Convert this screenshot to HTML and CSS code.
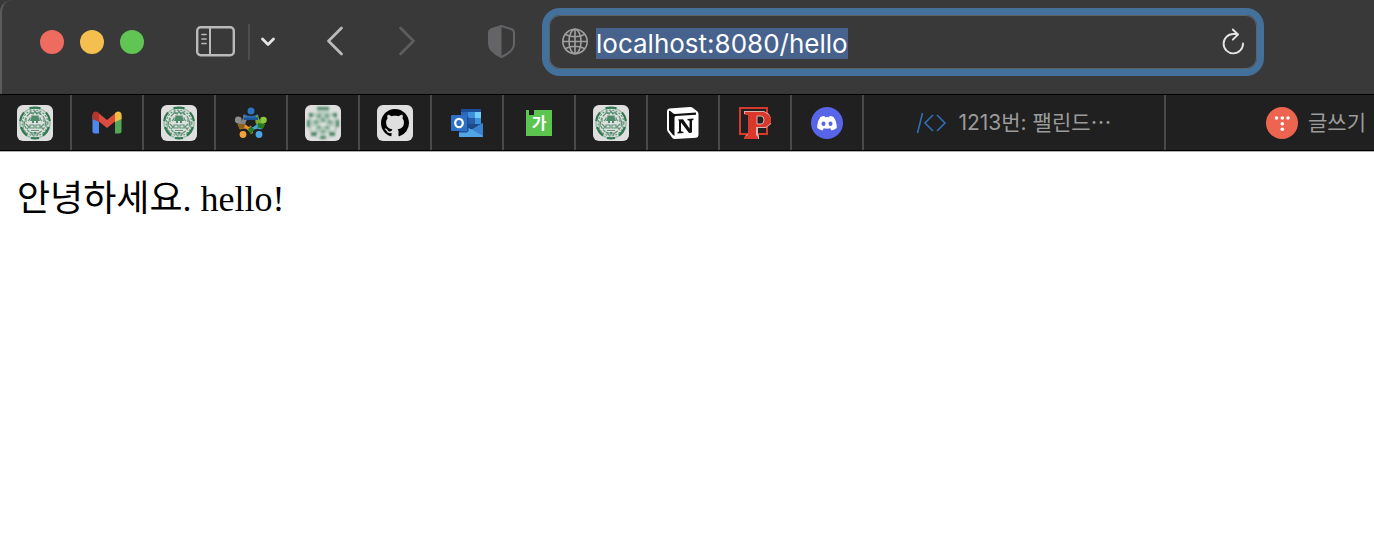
FILE: index.html
```html
<!DOCTYPE html>
<html lang="ko">
<head>
    <meta charset="UTF-8">
    <meta name="viewport" content="width=device-width, initial-scale=1.0">
    <title>hello</title>
    <link rel="stylesheet" href="styles.css">
</head>
<body>
    <svg class="symbols" aria-hidden="true">
        <symbol id="emblem" viewBox="0 0 36 36">
            <rect width="36" height="36" rx="6" fill="#dedfde"/>
            <circle cx="18" cy="18" r="15" fill="none" stroke="#8db39d" stroke-width="1.2"/>
            <g fill="none" stroke="#2f7850" stroke-width="2.2">
                <path d="M12.5 3.4Q18 1.8 23.5 3.4M3.2 16Q3.8 11 7 7.6M32.8 16Q32.2 11 29 7.6M4 22Q6 27.5 10 30.5M32 22Q30 27.5 26 30.5M14 33Q18 33.8 22 33"/>
            </g>
            <g fill="none" stroke="#5f9577" stroke-width="1.2">
                <circle cx="18" cy="18" r="12.8" stroke-dasharray="2 1.4"/>
                <circle cx="18" cy="18" r="10.4" stroke-dasharray="3 1.4"/>
                <path d="M12 9L14 7L16 9L18 6L20 9L22 7L24 9M14 11H22M12 13H24M11 16L13 14M25 16L23 14M9 19L12 22L10 24M27 19L24 22L26 24M13 20H17V23H13ZM19 20H23V23H19ZM14 25.5H22M13 27L16 30M23 27L20 30M9 13V17M27 13V17M7 16V22M29 16V22"/>
            </g>
            <path d="M15 11H21L23 16H21V18H19V16H17V18H15V16H13ZM16.5 27H19.5L18 31Z" fill="#4f8b69"/>
        </symbol>
    </svg>

    <header class="browser">
        <div class="toolbar">
            <div class="lights">
                <button class="light red" aria-label="Close"></button>
                <button class="light yellow" aria-label="Minimize"></button>
                <button class="light green" aria-label="Zoom"></button>
            </div>

            <div class="sidebar-tools">
                <button class="tool" aria-label="Sidebar">
                    <svg width="40" height="32" viewBox="0 0 40 32" fill="none" stroke="#bababb" stroke-linecap="round">
                        <rect x="1.2" y="1.2" width="36.6" height="28" rx="3.5" stroke-width="2.4"/>
                        <path d="M14 1.5V29" stroke-width="2" stroke-linecap="butt"/>
                        <path d="M6 8.5H10M6 13H10M6 17.5H10" stroke-width="1.7"/>
                    </svg>
                </button>
                <span class="divider"></span>
                <button class="tool" aria-label="Tab groups">
                    <svg width="16" height="12" viewBox="0 0 16 12" fill="none" stroke="#e4e4e4" stroke-width="2.8" stroke-linecap="round" stroke-linejoin="round">
                        <path d="M2.5 3L8 8.5L13.5 3"/>
                    </svg>
                </button>
            </div>

            <div class="history">
                <button class="tool" aria-label="Back">
                    <svg width="20" height="32" viewBox="0 0 20 32" fill="none" stroke="#bababb" stroke-width="2.8" stroke-linecap="round" stroke-linejoin="round">
                        <path d="M15.5 2L2.5 15L15.5 28"/>
                    </svg>
                </button>
                <button class="tool" aria-label="Forward">
                    <svg width="20" height="32" viewBox="0 0 20 32" fill="none" stroke="#5d5d5e" stroke-width="2.8" stroke-linecap="round" stroke-linejoin="round">
                        <path d="M2.5 2L15.5 15L2.5 28"/>
                    </svg>
                </button>
            </div>

            <button class="tool" aria-label="Privacy report">
                <svg width="28" height="34" viewBox="0 0 28 34">
                    <path d="M13.5 1L23 4Q26 5 26 7.5V18.5Q26 26.5 13.5 32Q1 26.5 1 18.5V7.5Q1 5 4 4Z" fill="none" stroke="#646466" stroke-width="2" stroke-linejoin="round"/>
                    <path d="M13.5 1L4 4Q1 5 1 7.5V18.5Q1 26.5 13.5 32Z" fill="#646466"/>
                </svg>
            </button>

            <form class="address">
                <svg width="28" height="28" viewBox="0 0 28 28" fill="none" stroke="#a0a0a1" stroke-width="1.6" aria-hidden="true">
                    <circle cx="14" cy="13.5" r="12.2"/>
                    <ellipse cx="14" cy="13.5" rx="6" ry="12.2"/>
                    <path d="M14 1.5V25.5M2 13.5H26M4.5 6.5Q14 11 23.5 6.5M4.5 20.5Q14 16 23.5 20.5"/>
                </svg>
                <input class="url" type="text" id="url" aria-label="Address" value="localhost:8080/hello" spellcheck="false">
                <button class="tool" type="button" aria-label="Reload">
                    <svg width="24" height="28" viewBox="0 0 24 28" fill="none" stroke="#e4e4e4" stroke-width="1.9" stroke-linecap="round" stroke-linejoin="round">
                        <path d="M22 15.5A9.7 9.7 0 1 1 12.3 6H16.5"/>
                        <path d="M11.8 1.5L17 6.5L11.8 11.7"/>
                    </svg>
                </button>
            </form>
        </div>

        <nav class="tabs" aria-label="Tabs">
            <button class="tab" aria-label="Emblem 1"><svg width="36" height="36"><use href="#emblem"/></svg></button>
            <button class="tab" aria-label="Gmail">
                <svg width="30" height="23" viewBox="0 0 30 23">
                    <path d="M.5 4L7 8V22.5H3Q.5 22.5 .5 20.5Z" fill="#4f87ed"/>
                    <path d="M29.5 4L23 8V22.5H27Q29.5 22.5 29.5 20.5Z" fill="#56a755"/>
                    <path d="M7 2.5L15 9L23 2.5V10.5L15 17L7 10.5Z" fill="#db4c3e"/>
                    <path d="M.5 8V4Q.5 .5 4 .5Q5.5 .5 7 2V11Z" fill="#b5352b"/>
                    <path d="M29.5 8V4Q29.5 .5 26 .5Q24.5 .5 23 2V11Z" fill="#f3bd42"/>
                </svg>
            </button>
            <button class="tab" aria-label="Emblem 2"><svg width="36" height="36"><use href="#emblem"/></svg></button>
            <button class="tab" aria-label="Community">
                <svg width="34" height="32" viewBox="0 0 34 32">
                    <path d="M9.5 7Q17 11 24 7V14H9.5Z" fill="#2c6cb4"/>
                    <path d="M22 9L24 8Q25 15 31 17L29 21L21 16Z" fill="#78ad32"/>
                    <path d="M29 21L27 22.5Q20 20 17 27L14.5 23L23 17Z" fill="#4aa5dc"/>
                    <path d="M19 26L17 27Q13 19 6 22.5L3.5 17L17 18Z" fill="#e7962f"/>
                    <path d="M3.5 17Q9 15 9.5 8L13 11L11 18Z" fill="#858585"/>
                    <path d="M9.5 10Q17 12 24 10V13H9.5Z" fill="#1d5590"/>
                    <path d="M14 22L17 19.5L20 22L17 27.5ZM24 16L31 17L28.5 22L23.5 20.5Z" fill="#237b20"/>
                    <path d="M3.5 17H11L10 21.5L5.5 22Z" fill="#87601d"/>
                    <path d="M13 13H21L22 18L19 20L17 18.5L15 20L12 18Z" fill="#202020"/>
                    <circle cx="17" cy="4" r="3.5" fill="#2f74c0"/>
                    <circle cx="29.5" cy="13" r="3.3" fill="#8dc63f"/>
                    <circle cx="25" cy="27.5" r="3.4" fill="#4aa5e5"/>
                    <circle cx="9" cy="27.5" r="3.4" fill="#f4a13b"/>
                    <circle cx="4.3" cy="13" r="3.4" fill="#8d8d8d"/>
                </svg>
            </button>
            <button class="tab" aria-label="Emblem 3">
                <svg width="36" height="36" viewBox="0 0 36 36">
                    <defs>
                        <filter id="soft"><feGaussianBlur stdDeviation=".8"/></filter>
                    </defs>
                    <rect width="36" height="36" rx="6" fill="#dedfde"/>
                    <g filter="url(#soft)">
                        <circle cx="18" cy="18" r="15.5" fill="#b7cbbf"/>
                        <path d="M12 2H24V5H12ZM4 8H8V12H4ZM28 8H32V12H28ZM2 15H5V22H2ZM31 15H34V22H31ZM6 27H12V31H6ZM24 27H30V31H24ZM15 31H21V34H15Z" fill="#4c8a69"/>
                        <path d="M12 9H16V13H12ZM20 9H24V13H20ZM9 15H13V19H9ZM23 15H27V19H23ZM16 13H20V17H16ZM12 21H16V24H12ZM20 21H24V24H20ZM16 25H20V28H16Z" fill="#7ba78d"/>
                        <path d="M8 5H12V8H8ZM24 5H28V8H24ZM7 12H11V15H7ZM25 12H29V15H25ZM15 18H21V21H15ZM7 21H10V26H7ZM26 21H29V26H26ZM12 28H15V32H12ZM21 28H24V32H21Z" fill="#dbe3de"/>
                    </g>
                </svg>
            </button>
            <button class="tab" aria-label="GitHub">
                <svg width="36" height="36" viewBox="0 0 36 36">
                    <rect width="36" height="36" rx="6" fill="#dedfde"/>
                    <path transform="translate(4 4) scale(1.75)" d="M8 0C3.58 0 0 3.58 0 8c0 3.54 2.29 6.53 5.47 7.59.4.07.55-.17.55-.38 0-.19-.01-.82-.01-1.49-2.01.37-2.53-.49-2.69-.94-.09-.23-.48-.94-.82-1.13-.28-.15-.68-.52-.01-.53.63-.01 1.08.58 1.23.82.72 1.21 1.87.87 2.33.66.07-.52.28-.87.51-1.07-1.78-.2-3.64-.89-3.64-3.95 0-.87.31-1.59.82-2.15-.08-.2-.36-1.02.08-2.12 0 0 .67-.21 2.2.82.64-.18 1.32-.27 2-.27s1.36.09 2 .27c1.53-1.04 2.2-.82 2.2-.82.44 1.1.16 1.92.08 2.12.51.56.82 1.27.82 2.15 0 3.07-1.87 3.75-3.65 3.95.29.25.54.73.54 1.48 0 1.07-.01 1.93-.01 2.2 0 .21.15.46.55.38A8.01 8.01 0 0 0 16 8c0-4.42-3.58-8-8-8Z" fill="#000"/>
                </svg>
            </button>
            <button class="tab" aria-label="Outlook">
                <svg width="32" height="28" viewBox="0 0 32 28">
                    <path d="M10 1Q10 0 11 0H29Q30 0 30 1V17H10Z" fill="#2c69bd"/>
                    <path d="M10 1Q10 0 11 0H29Q30 0 30 1V3H10Z" fill="#1c4d99"/>
                    <path d="M17 3H24V9H17Z" fill="#3c91dd"/>
                    <path d="M24 3H30V9H24Z" fill="#70cef8"/>
                    <path d="M24 9H30V15H24Z" fill="#3d92dc"/>
                    <path d="M17 9H24V15H17Z" fill="#265da9"/>
                    <path d="M17 15H30L21 20L16 18Z" fill="#1c4a8b"/>
                    <path d="M32 14V28H8V20H21Z" fill="#3c83cf"/>
                    <path d="M8 20L18 19L32 27Q31.5 28 31 28H9Q8 28 8 27Z" fill="#52a6e6"/>
                    <path d="M16 7L17.5 8V22L16 23.5H8V22H16Z" fill="#1d4f94"/>
                    <rect y="6" width="16" height="16" rx="1" fill="#2d71c7"/>
                    <ellipse cx="8" cy="14" rx="3.8" ry="4.2" fill="none" stroke="#fff" stroke-width="2.2"/>
                </svg>
            </button>
            <button class="tab" aria-label="Dictionary"><span class="book">가</span></button>
            <button class="tab" aria-label="Emblem 4"><svg width="36" height="36"><use href="#emblem"/></svg></button>
            <button class="tab" aria-label="Notion">
                <svg width="32" height="32" viewBox="0 0 32 32">
                    <path d="M2 1.5L23 0Q25 0 26 1L30.5 4.5Q31.5 5.5 31.5 7V28Q31.5 30.5 29 30.7L8 32Q6 32 5 30.5L1 25Q0 24 0 22V4Q0 2 2 1.5Z" fill="#fff"/>
                    <path d="M3 3.8L6 6.2Q7 7 8 6.9L29 5.5V7.8L9 9Q7.5 9.1 7.5 10.5V29L5.5 27.5L2 23V4Z" fill="#111"/>
                    <path d="M11 12.5L16 12.2L22.5 21.5V13.8L20.5 13.2V12L26.5 11.6V12.8L25 13.5V25.5L22 26L14 15.5V24.3L16.5 25V26L10.5 26.4V25.2L12 24.5V14Z" fill="#111"/>
                </svg>
            </button>
            <button class="tab" aria-label="Programmers">
                <svg width="33" height="32" viewBox="0 0 33 32">
                    <path d="M1 1H28V27H1Z" fill="none" stroke="#d7392d" stroke-width="2"/>
                    <path d="M5 4H25L30 7L32 11V17L27 21H19V27L20 29V32H6V29L9 27V8L5 7Z" fill="#d9b4b3"/>
                    <path d="M6 5H25L30 8L32 11V16L27 20H17V28L19 30V32H5V30L9 28V8H6Z" fill="#db382c"/>
                    <path d="M18 9H22Q25 9 25 13Q25 17 22 17H18Z" fill="#202020" stroke="#d9b4b3"/>
                </svg>
            </button>
            <button class="tab" aria-label="Discord">
                <svg width="32" height="32" viewBox="0 0 32 32">
                    <circle cx="16" cy="16" r="16" fill="#5865e8"/>
                    <path d="M9.5 10Q12 8.8 13.4 9L14 10.2Q16 9.9 18 10.2L18.6 9Q20.5 8.8 22.5 10Q26 15 25.8 21Q23.5 23 20.5 23.4L19.3 21.3Q16 22.2 12.7 21.3L11.5 23.4Q8.5 23 6.2 21Q6 15 9.5 10Z" fill="#fff"/>
                    <ellipse cx="12.5" cy="16.8" rx="2" ry="2.2" fill="#5865e8"/>
                    <ellipse cx="19.5" cy="16.8" rx="2" ry="2.2" fill="#5865e8"/>
                </svg>
            </button>
            <button class="tab wide">
                <svg width="32" height="22" viewBox="0 0 32 22" fill="none" stroke="#2d70b8" stroke-width="1.6" aria-hidden="true">
                    <path d="M1.5 21L6.5 1M17 3L9 11L17 19M21 3L29 11L21 19"/>
                </svg>
                <span>1213번: 팰린드⋯</span>
            </button>
            <button class="tab wide">
                <svg width="32" height="32" viewBox="0 0 32 32" aria-hidden="true">
                    <circle cx="16" cy="16" r="16" fill="#ed6551"/>
                    <g fill="#fff">
                        <circle cx="10.5" cy="11" r="1.8"/>
                        <circle cx="16.3" cy="11" r="1.8"/>
                        <circle cx="22" cy="11" r="1.8"/>
                        <circle cx="16.3" cy="16.7" r="1.8"/>
                        <circle cx="16.3" cy="22.3" r="1.8"/>
                    </g>
                </svg>
                <span>글쓰기</span>
            </button>
        </nav>
    </header>

    <main class="page">안녕하세요. hello!</main>

    <script>
        // Focus the address and select all of it
        const url = document.getElementById('url');
        url.focus();
        url.select();
    </script>
</body>
</html>
```
FILE: styles.css
```css
* {
    box-sizing: border-box;
}
body {
    margin: 0;
    background: #fff;
    font-family: Inter, "Noto Sans CJK KR", sans-serif;
}
button {
    padding: 0;
    border: none;
    background: none;
    font: inherit;
    color: inherit;
}
svg {
    display: block;
    flex: none;
}
.symbols {
    display: none;
}
.browser {
    background: #39393a;
    border-bottom: 1px solid #b0b0b0;
}
.toolbar {
    display: flex;
    align-items: center;
    height: 94px;
    padding: 0 110px 10px 38px;
    border-left: 2px solid #5b5b5c;
    border-top-left-radius: 12px;
}
.lights {
    display: flex;
    gap: 16px;
    margin-right: 52px;
}
.light {
    width: 24px;
    height: 24px;
    border-radius: 50%;
}
.red { background: #ed6b5f; }
.yellow { background: #f5bf4f; }
.green { background: #61c554; }
.sidebar-tools {
    display: flex;
    align-items: center;
    margin-right: 50px;
}
.divider {
    width: 2px;
    height: 36px;
    margin: 0 10px 0 12px;
    background: #4d4d4e;
}
.history {
    display: flex;
    gap: 52px;
    margin-right: 70px;
}
.address {
    display: flex;
    align-items: center;
    flex: 1;
    height: 68px;
    margin-left: 26px;
    padding: 0 12px;
    background: #39393a;
    border: 7px solid #44719c;
    border-radius: 18px;
    box-shadow: inset 0 0 0 1px #5d6265;
}
.url {
    flex: 1;
    min-width: 0;
    height: 34px;
    margin-left: 7px;
    padding: 2px 0 0;
    border: none;
    outline: none;
    background: none;
    color: #fff;
    font-family: Inter, sans-serif;
    font-size: 26px;
}
.url::selection {
    background: #47628c;
    color: #fff;
}
.tabs {
    display: flex;
    height: 57px;
    overflow: hidden;
    background: #202020;
    border-top: 1px solid #000;
    border-bottom: 1px solid #000;
}
.tab {
    display: flex;
    align-items: center;
    justify-content: center;
    flex: 0 0 72px;
    border-right: 2px solid #4a4a4a;
    color: #9b9b9b;
    font-size: 21px;
    line-height: 28px;
}
.wide {
    flex-basis: 302px;
    gap: 10px;
}
.book {
    width: 26px;
    height: 26px;
    background: linear-gradient(#202020, #202020) 3px 0 / 5px 5px no-repeat #5bc550;
    color: #fff;
    font-size: 16px;
    font-weight: 700;
    line-height: 26px;
}
.page {
    padding: 17px;
    color: #000;
    font-family: "Liberation Serif", "Noto Sans CJK KR", serif;
    font-size: 36px;
}
```
